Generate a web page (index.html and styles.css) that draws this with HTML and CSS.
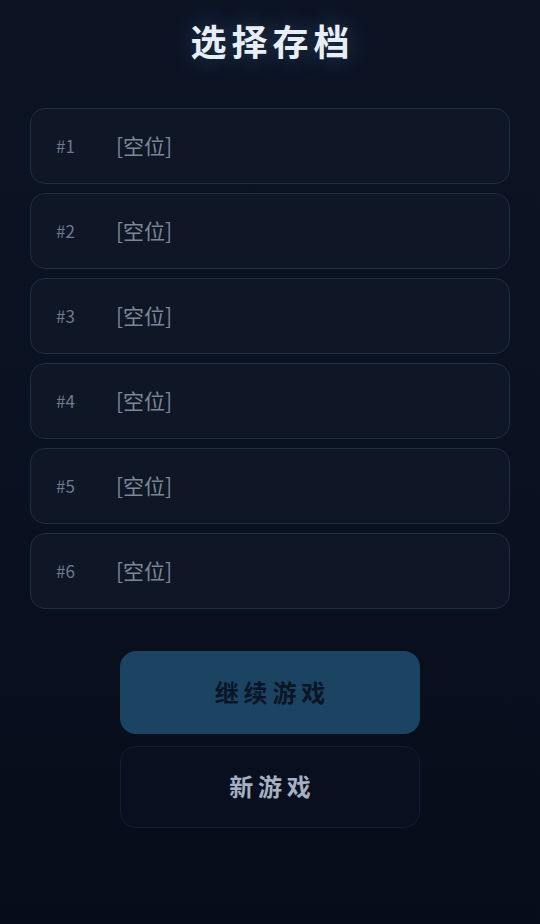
FILE: index.html
```html
<!DOCTYPE html>
<html lang="zh-CN">
<head>
    <meta charset="UTF-8">
    <meta name="viewport" content="width=device-width, initial-scale=1.0">
    <title>选择存档</title>
    <link rel="stylesheet" href="styles.css">
</head>
<body>
    <div class="screen">
        <h1 class="title">选择存档</h1>

        <div class="slots">
            <div class="slot"><span class="slot-no">#1</span><span class="slot-name">[空位]</span></div>
            <div class="slot"><span class="slot-no">#2</span><span class="slot-name">[空位]</span></div>
            <div class="slot"><span class="slot-no">#3</span><span class="slot-name">[空位]</span></div>
            <div class="slot"><span class="slot-no">#4</span><span class="slot-name">[空位]</span></div>
            <div class="slot"><span class="slot-no">#5</span><span class="slot-name">[空位]</span></div>
            <div class="slot"><span class="slot-no">#6</span><span class="slot-name">[空位]</span></div>
        </div>

        <div class="actions">
            <button class="btn btn-primary">继续游戏</button>
            <button class="btn btn-secondary">新游戏</button>
        </div>
    </div>
</body>
</html>
```

FILE: styles.css
```css
* {
    margin: 0;
    padding: 0;
    box-sizing: border-box;
}

body {
    font-family: 'Noto Sans CJK SC', sans-serif;
    background: linear-gradient(180deg, #0c1424 0%, #0a1120 50%, #070c1a 100%);
    height: 924px;
    overflow: hidden;
}

.screen {
    display: flex;
    flex-direction: column;
    padding: 16px 30px 0;
}

.title {
    font-size: 36px;
    line-height: 48px;
    font-weight: 700;
    letter-spacing: 5px;
    text-indent: 5px;
    text-align: center;
    color: #e8eef6;
    text-shadow: 0 0 24px rgba(110, 170, 230, 0.3);
}

.slots {
    display: flex;
    flex-direction: column;
    gap: 9px;
    margin-top: 44px;
}

.slot {
    display: flex;
    align-items: center;
    height: 76px;
    padding: 0 25px 2px;
    background-color: #0f1625;
    border: 1px solid #1c2f43;
    border-radius: 15px;
}

.slot-no {
    width: 60px;
    font-size: 17px;
    color: #6c7b90;
}

.slot-name {
    font-size: 21px;
    color: #7c8798;
}

.actions {
    display: flex;
    flex-direction: column;
    align-items: center;
    gap: 12px;
    margin-top: 42px;
}

.btn {
    width: 300px;
    height: 83px;
    padding-bottom: 3px;
    border-radius: 16px;
    font-family: 'Noto Sans CJK SC', sans-serif;
    font-size: 24px;
    font-weight: 700;
    letter-spacing: 0.2em;
    text-indent: 0.2em;
    cursor: pointer;
}

.btn-primary {
    background-color: #1a4461;
    border: none;
    color: #0b1526;
}

.btn-secondary {
    height: 82px;
    background-color: #090f1e;
    border: 1px solid #141e2f;
    color: #a4b1c3;
}
```
